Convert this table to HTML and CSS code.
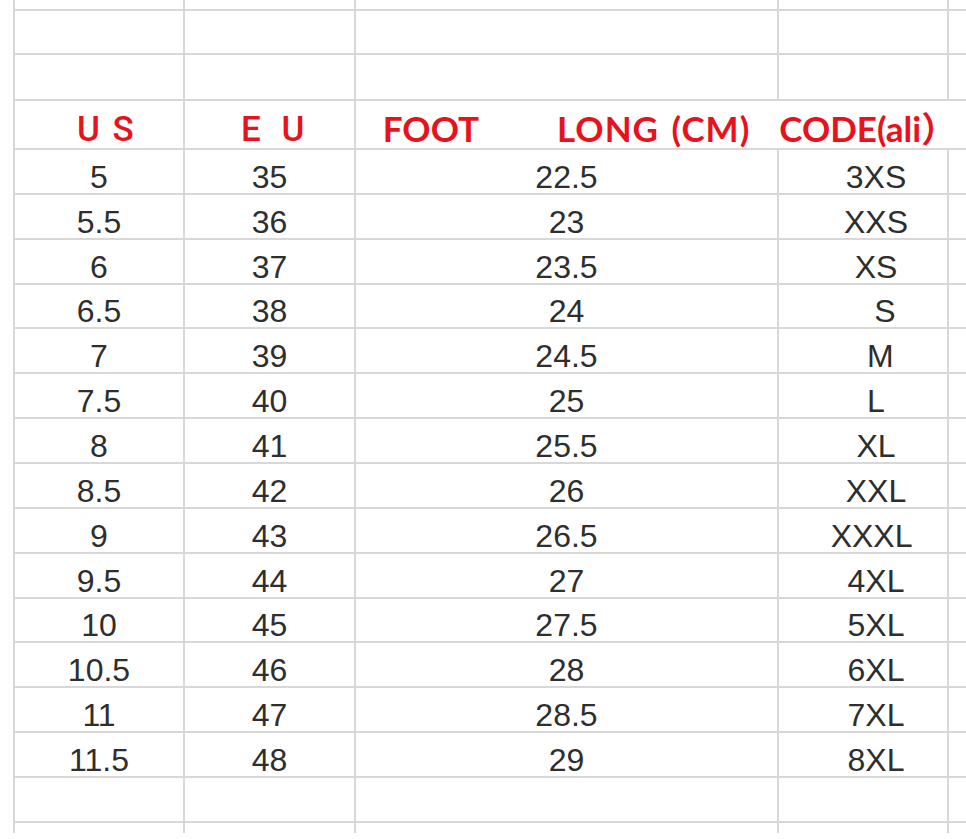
FILE: index.html
```html
<!DOCTYPE html>
<html lang="en">
<head>
<meta charset="utf-8">
<title>Size chart</title>
<link rel="stylesheet" href="styles.css">
</head>
<body>
<div class="sheet">
  <div class="row r-top"><div class="cell"></div><div class="cell"></div><div class="cell"></div><div class="cell"></div><div class="cell"></div></div>
  <div class="row r-a"><div class="cell"></div><div class="cell"></div><div class="cell"></div><div class="cell"></div><div class="cell"></div></div>
  <div class="row r-b"><div class="cell"></div><div class="cell"></div><div class="cell"></div><div class="cell"></div><div class="cell"></div></div>
  <div class="row r-head">
    <div class="cell hd hd-us">U S</div>
    <div class="cell hd hd-eu">E U</div>
    <div class="cell hd-wide">
      <span class="hd2 foot">FOOT</span>
      <span class="hd2 long">LONG (CM)</span>
      <span class="hd2 code">CODE(ali）</span>
    </div>
  </div>
  <div class="row data"><div class="cell">5</div><div class="cell">35</div><div class="cell">22.5</div><div class="cell sz">3XS</div><div class="cell"></div></div>
  <div class="row data"><div class="cell">5.5</div><div class="cell">36</div><div class="cell">23</div><div class="cell sz">XXS</div><div class="cell"></div></div>
  <div class="row data"><div class="cell">6</div><div class="cell">37</div><div class="cell">23.5</div><div class="cell sz">XS</div><div class="cell"></div></div>
  <div class="row data"><div class="cell">6.5</div><div class="cell">38</div><div class="cell">24</div><div class="cell sz">&nbsp;&nbsp;S</div><div class="cell"></div></div>
  <div class="row data"><div class="cell">7</div><div class="cell">39</div><div class="cell">24.5</div><div class="cell sz">&nbsp;M</div><div class="cell"></div></div>
  <div class="row data"><div class="cell">7.5</div><div class="cell">40</div><div class="cell">25</div><div class="cell sz">L</div><div class="cell"></div></div>
  <div class="row data"><div class="cell">8</div><div class="cell">41</div><div class="cell">25.5</div><div class="cell sz">XL</div><div class="cell"></div></div>
  <div class="row data"><div class="cell">8.5</div><div class="cell">42</div><div class="cell">26</div><div class="cell sz">XXL</div><div class="cell"></div></div>
  <div class="row data"><div class="cell">9</div><div class="cell">43</div><div class="cell">26.5</div><div class="cell sz">XXXL&nbsp;</div><div class="cell"></div></div>
  <div class="row data"><div class="cell">9.5</div><div class="cell">44</div><div class="cell">27</div><div class="cell sz">4XL</div><div class="cell"></div></div>
  <div class="row data"><div class="cell">10</div><div class="cell">45</div><div class="cell">27.5</div><div class="cell sz">5XL</div><div class="cell"></div></div>
  <div class="row data"><div class="cell">10.5</div><div class="cell">46</div><div class="cell">28</div><div class="cell sz">6XL</div><div class="cell"></div></div>
  <div class="row data"><div class="cell">11</div><div class="cell">47</div><div class="cell">28.5</div><div class="cell sz">7XL</div><div class="cell"></div></div>
  <div class="row data"><div class="cell">11.5</div><div class="cell">48</div><div class="cell">29</div><div class="cell sz">8XL</div><div class="cell"></div></div>
  <div class="row data"><div class="cell"></div><div class="cell"></div><div class="cell"></div><div class="cell"></div><div class="cell"></div></div>
  <div class="row r-end"><div class="cell"></div><div class="cell"></div><div class="cell"></div><div class="cell"></div><div class="cell"></div></div>
</div>
</body>
</html>
```

FILE: styles.css
```css
html, body {
  margin: 0;
  padding: 0;
  background: #ffffff;
}

body {
  width: 966px;
  height: 839px;
  overflow: hidden;
}

.sheet {
  margin-left: 13px;
  padding-left: 2px;
  display: flex;
  flex-direction: column;
  gap: 2px;
  background: #d8d8d8;
}

.row {
  display: grid;
  grid-template-columns: 168px 169px 421px 168px 1fr;
  column-gap: 2px;
}

.cell {
  background: #ffffff;
  display: flex;
  align-items: flex-end;
  justify-content: center;
  white-space: pre;
}

.r-top { height: 9px; }
.r-a { height: 42px; }
.r-b { height: 44px; }
.r-head { height: 47px; }
.data { height: 42.86px; }
.r-end { height: 10px; }

.data .cell {
  font-family: "Liberation Sans", Arial, sans-serif;
  font-size: 32px;
  line-height: 32px;
  color: #2e2e2e;
}

.data .sz {
  padding-left: 26px;
}

.hd {
  font-family: Roboto, "Liberation Sans", sans-serif;
  font-weight: 500;
  font-size: 35px;
  line-height: 35px;
  color: #e8121c;
  justify-content: flex-start;
  padding-bottom: 1px;
  letter-spacing: 1px;
}

.hd-us {
  padding-left: 62px;
  word-spacing: 2px;
}

.hd-eu {
  padding-left: 56px;
  word-spacing: 10px;
}

.hd-wide {
  grid-column: 3 / span 3;
  background: #ffffff;
  display: flex;
  align-items: flex-end;
  padding-left: 17px;
  padding-bottom: 2px;
}

.hd2 {
  font-family: Lato, "Noto Sans CJK SC", sans-serif;
  font-weight: 700;
  font-size: 35px;
  line-height: 35px;
  color: #e8121c;
  white-space: nowrap;
}

.long {
  margin-left: 78px;
  letter-spacing: 1px;
  word-spacing: 3px;
}

.code { margin-left: 29px; }
```
